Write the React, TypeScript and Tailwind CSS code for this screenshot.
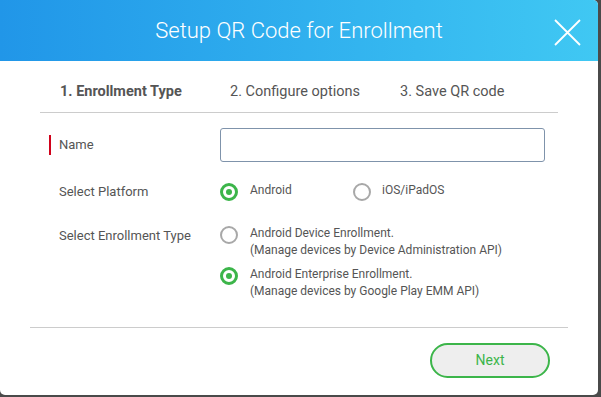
import { useState } from 'react'

function Radio({ checked }: { checked: boolean }) {
  return checked ? (
    <span className="w-[18px] h-[18px] rounded-full border-[3px] border-[#3cb54a] flex items-center justify-center shrink-0">
      <span className="w-[6px] h-[6px] rounded-full bg-[#3cb54a]" />
    </span>
  ) : (
    <span className="block w-[18px] h-[18px] rounded-full border-2 border-[#a8a8a8] shrink-0" />
  )
}

export default function App() {
  const [platform, setPlatform] = useState('android')
  const [type, setType] = useState('enterprise')
  const [name, setName] = useState('')

  return (
    <div className="w-[601px] h-[397px] bg-[#4a4a4a] font-['Roboto',sans-serif] overflow-hidden">
      <div className="w-[598px] h-[395px] bg-white rounded-b-[5px] rounded-tr-[5px] flex flex-col overflow-hidden">
        {/* header */}
        <div className="h-[61px] shrink-0 bg-gradient-to-r from-[#2196e8] to-[#40c8f3] flex items-center justify-center relative">
          <h1 className="text-white text-[22px] font-light">Setup QR Code for Enrollment</h1>
          <button className="absolute right-[16px] top-[17px] w-[30px] h-[30px]">
            <svg viewBox="0 0 30 30" className="w-[30px] h-[30px]" stroke="white" strokeWidth={1.8} fill="none">
              <path d="M3 3 L28 28 M28 3 L3 28" />
            </svg>
          </button>
        </div>

        {/* steps */}
        <div className="mx-[40px] h-[52px] border-b border-[#cccccc] flex items-center text-[14.5px] text-[#555] pt-[10px]">
          <span className="font-bold w-[190px] pl-[20px]">1. Enrollment Type</span>
          <span className="w-[170px]">2. Configure options</span>
          <span>3. Save QR code</span>
        </div>

        {/* form */}
        <div className="flex-1 pl-[49px] pr-[53px] pt-[15px] text-[13px] text-[#555]">
          <div className="flex items-center h-[34px]">
            <div className="w-[171px] flex items-center">
              <span className="w-[2px] h-[20px] bg-[#d0021b] mr-[8px]" />
              <span>Name</span>
            </div>
            <input
              value={name}
              onChange={(e) => setName(e.target.value)}
              className="flex-1 h-[34px] border border-[#7f93ab] rounded-[3px] px-2 outline-none"
            />
          </div>

          <div className="flex items-center mt-[20px]">
            <div className="w-[171px] pl-[10px]">Select Platform</div>
            <div className="flex items-center text-[12px]">
              <button className="flex items-center gap-[12px] w-[133px]" onClick={() => setPlatform('android')}>
                <Radio checked={platform === 'android'} />
                <span className="-mt-[3px]">Android</span>
              </button>
              <button className="flex items-center gap-[11px]" onClick={() => setPlatform('ios')}>
                <Radio checked={platform === 'ios'} />
                <span className="-mt-[3px]">iOS/iPadOS</span>
              </button>
            </div>
          </div>

          <div className="flex mt-[23px]">
            <div className="w-[171px] pl-[10px] pt-[1px]">Select Enrollment Type</div>
            <div className="flex flex-col gap-[7px] text-[12px] leading-[17px]">
              <button className="flex items-start gap-[12px] text-left" onClick={() => setType('device')}>
                <span className="block mt-[1px]"><Radio checked={type === 'device'} /></span>
                <span>
                  Android Device Enrollment.
                  <br />
                  (Manage devices by Device Administration API)
                </span>
              </button>
              <button className="flex items-start gap-[12px] text-left" onClick={() => setType('enterprise')}>
                <span className="block mt-[1px]"><Radio checked={type === 'enterprise'} /></span>
                <span>
                  Android Enterprise Enrollment.
                  <br />
                  (Manage devices by Google Play EMM API)
                </span>
              </button>
            </div>
          </div>
        </div>

        {/* footer */}
        <div className="mx-[30px] border-t border-[#cccccc] h-[68px] shrink-0 flex items-start justify-end pt-[15px] pr-[18px]">
          <button className="w-[120px] h-[35px] rounded-full border-2 border-[#3cb54a] bg-[#eeeeee] text-[#3cb54a] text-[14px]">
            Next
          </button>
        </div>
      </div>
    </div>
  )
}
